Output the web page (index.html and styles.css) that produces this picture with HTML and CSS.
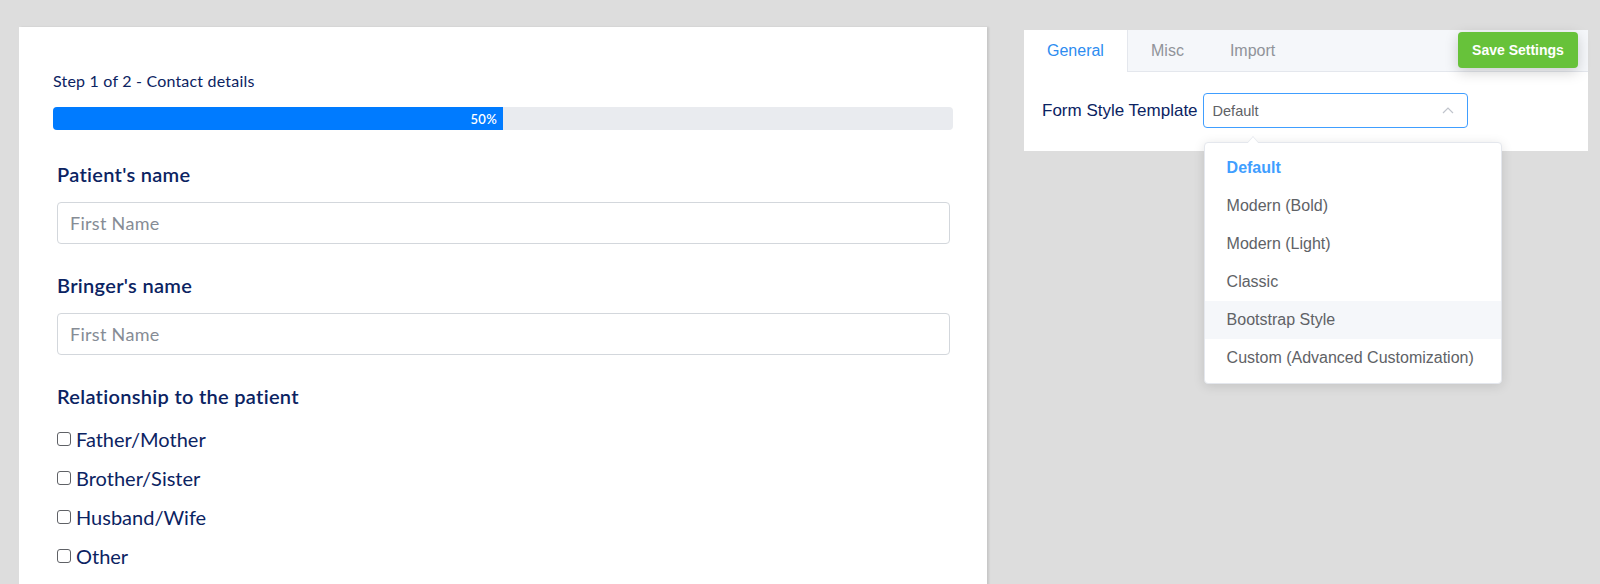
FILE: index.html
```html
<!DOCTYPE html>
<html lang="en">
<head>
<meta charset="utf-8">
<title>Form settings</title>
<link rel="stylesheet" href="styles.css">
</head>
<body>
<div class="page">
  <main class="form-panel">
    <div class="step">Step 1 of 2 - Contact details</div>
    <div class="progress"><div class="progress-fill" style="width:50%"><span>50%</span></div></div>

    <label class="field-label label-first">Patient's name</label>
    <div class="input"><span class="placeholder">First Name</span></div>

    <label class="field-label">Bringer's name</label>
    <div class="input"><span class="placeholder">First Name</span></div>

    <label class="field-label">Relationship to the patient</label>
    <ul class="checks">
      <li class="check"><span class="box"></span>Father/Mother</li>
      <li class="check"><span class="box"></span>Brother/Sister</li>
      <li class="check"><span class="box"></span>Husband/Wife</li>
      <li class="check"><span class="box"></span>Other</li>
    </ul>
  </main>

  <section class="settings">
    <div class="tabs">
      <div class="tab active">General</div>
      <div class="tab">Misc</div>
      <div class="tab">Import</div>
      <button class="save">Save Settings</button>
    </div>
    <div class="settings-body">
      <span class="setting-label">Form Style Template</span>
      <div class="select-wrap">
        <div class="select">
          <span>Default</span>
          <svg class="chev" width="12" height="7" viewBox="0 0 12 7"><path d="M1 6 L6 1 L11 6" fill="none" stroke="#c0c4cc" stroke-width="1.2"/></svg>
        </div>
        <ul class="dropdown">
          <li class="opt selected">Default</li>
          <li class="opt">Modern (Bold)</li>
          <li class="opt">Modern (Light)</li>
          <li class="opt">Classic</li>
          <li class="opt hover">Bootstrap Style</li>
          <li class="opt">Custom (Advanced Customization)</li>
        </ul>
      </div>
    </div>
  </section>
</div>
</body>
</html>
```

FILE: styles.css
```css
* { box-sizing: border-box; }
html, body { margin: 0; padding: 0; }
body {
  background: #dddddd;
  width: 1600px;
  height: 584px;
  overflow: hidden;
}
.page {
  display: flex;
  align-items: flex-start;
}

/* left form panel */
.form-panel {
  margin: 27px 0 0 19px;
  width: 968px;
  height: 560px;
  background: #fff;
  box-shadow: 2px 0 2px rgba(0,0,0,0.10);
  padding: 44px 34px 0 34px;
  font-family: "Lato", "Noto Sans", sans-serif;
  color: #0b2362;
  display: flex;
  flex-direction: column;
}
.step {
  font-size: 16px;
  line-height: 20px;
  letter-spacing: 0.2px;
  color: #0b2362;
}
.progress {
  margin-top: 16px;
  height: 23px;
  border-radius: 4px;
  background: #e9ebef;
  overflow: hidden;
}
.progress-fill {
  height: 100%;
  background: #007bff;
  display: flex;
  align-items: center;
  justify-content: flex-end;
  padding-right: 6px;
  color: #fff;
  font-size: 13px;
  font-weight: 600;
  letter-spacing: 0.3px;
}
.field-label {
  display: block;
  margin: 28px 0 0 4px;
  font-size: 20px;
  line-height: 26px;
  font-weight: 600;
  letter-spacing: 0.3px;
  color: #0b2362;
}
.label-first { margin-top: 31px; }
.input {
  margin: 15px 3px 0 4px;
  height: 42px;
  border: 1px solid #d3d7dc;
  border-radius: 4px;
  display: flex;
  align-items: center;
  padding-left: 12px;
}
.placeholder {
  font-size: 18px;
  letter-spacing: 0.3px;
  color: #868c95;
}
.checks {
  list-style: none;
  margin: 17px 0 0 4px;
  padding: 0;
  display: flex;
  flex-direction: column;
  gap: 13px;
}
.check {
  display: flex;
  align-items: center;
  font-size: 20px;
  line-height: 26px;
  color: #0b2362;
}
.box {
  width: 14px;
  height: 14px;
  border: 1px solid #5f6166;
  border-radius: 3px;
  margin-right: 5px;
  background: #fff;
}

/* right settings panel */
.settings {
  margin: 30px 0 0 37px;
  width: 564px;
  background: #fff;
  font-family: "Liberation Sans", "Helvetica Neue", Arial, sans-serif;
}
.tabs {
  display: flex;
  align-items: flex-start;
  height: 42px;
  background: #f5f7fa;
  border-bottom: 1px solid #e4e7ed;
}
.tab {
  height: 41px;
  padding: 0 23px;
  display: flex;
  align-items: center;
  font-size: 16px;
  color: #909399;
}
.tab.active {
  background: #fff;
  color: #2d8cf0;
  width: 104px;
  height: 42px;
  border-right: 1px solid #e4e7ed;
}
.save {
  margin: 2px 10px 0 auto;
  width: 120px;
  height: 36px;
  border: none;
  border-radius: 4px;
  background: #67c23a;
  color: #fff;
  font-family: "Liberation Sans", Arial, sans-serif;
  font-size: 14px;
  font-weight: 700;
  box-shadow: 0 4px 14px rgba(0,0,0,0.18);
}
.settings-body {
  display: flex;
  align-items: center;
  padding: 21px 18px 23px 18px;
}
.setting-label {
  font-size: 17px;
  color: #0b2362;
  margin-right: 5px;
}
.select-wrap {
  position: relative;
}
.select {
  width: 265px;
  height: 35px;
  border: 1px solid #409eff;
  border-radius: 4px;
  display: flex;
  align-items: center;
  justify-content: space-between;
  padding: 0 13px 0 9px;
  font-size: 14.5px;
  color: #606266;
}
.dropdown {
  position: absolute;
  left: 1px;
  top: 49px;
  width: 298px;
  margin: 0;
  padding: 6px 0;
  list-style: none;
  background: #fff;
  border: 1px solid #e4e7ed;
  border-radius: 4px;
  box-shadow: 0 2px 12px rgba(0,0,0,0.12);
  z-index: 5;
}
.dropdown::before,
.dropdown::after {
  content: "";
  position: absolute;
  left: 42px;
  border: 6px solid transparent;
  border-top-width: 0;
}
.dropdown::before {
  top: -7px;
  border-bottom: 7px solid #e4e7ed;
}
.dropdown::after {
  top: -6px;
  border-bottom: 7px solid #fff;
}
.opt {
  height: 38px;
  line-height: 38px;
  padding-left: 22px;
  font-size: 16px;
  color: #606266;
}
.opt.selected {
  color: #409eff;
  font-weight: 700;
}
.opt.hover {
  background: #f5f7fa;
}
```
